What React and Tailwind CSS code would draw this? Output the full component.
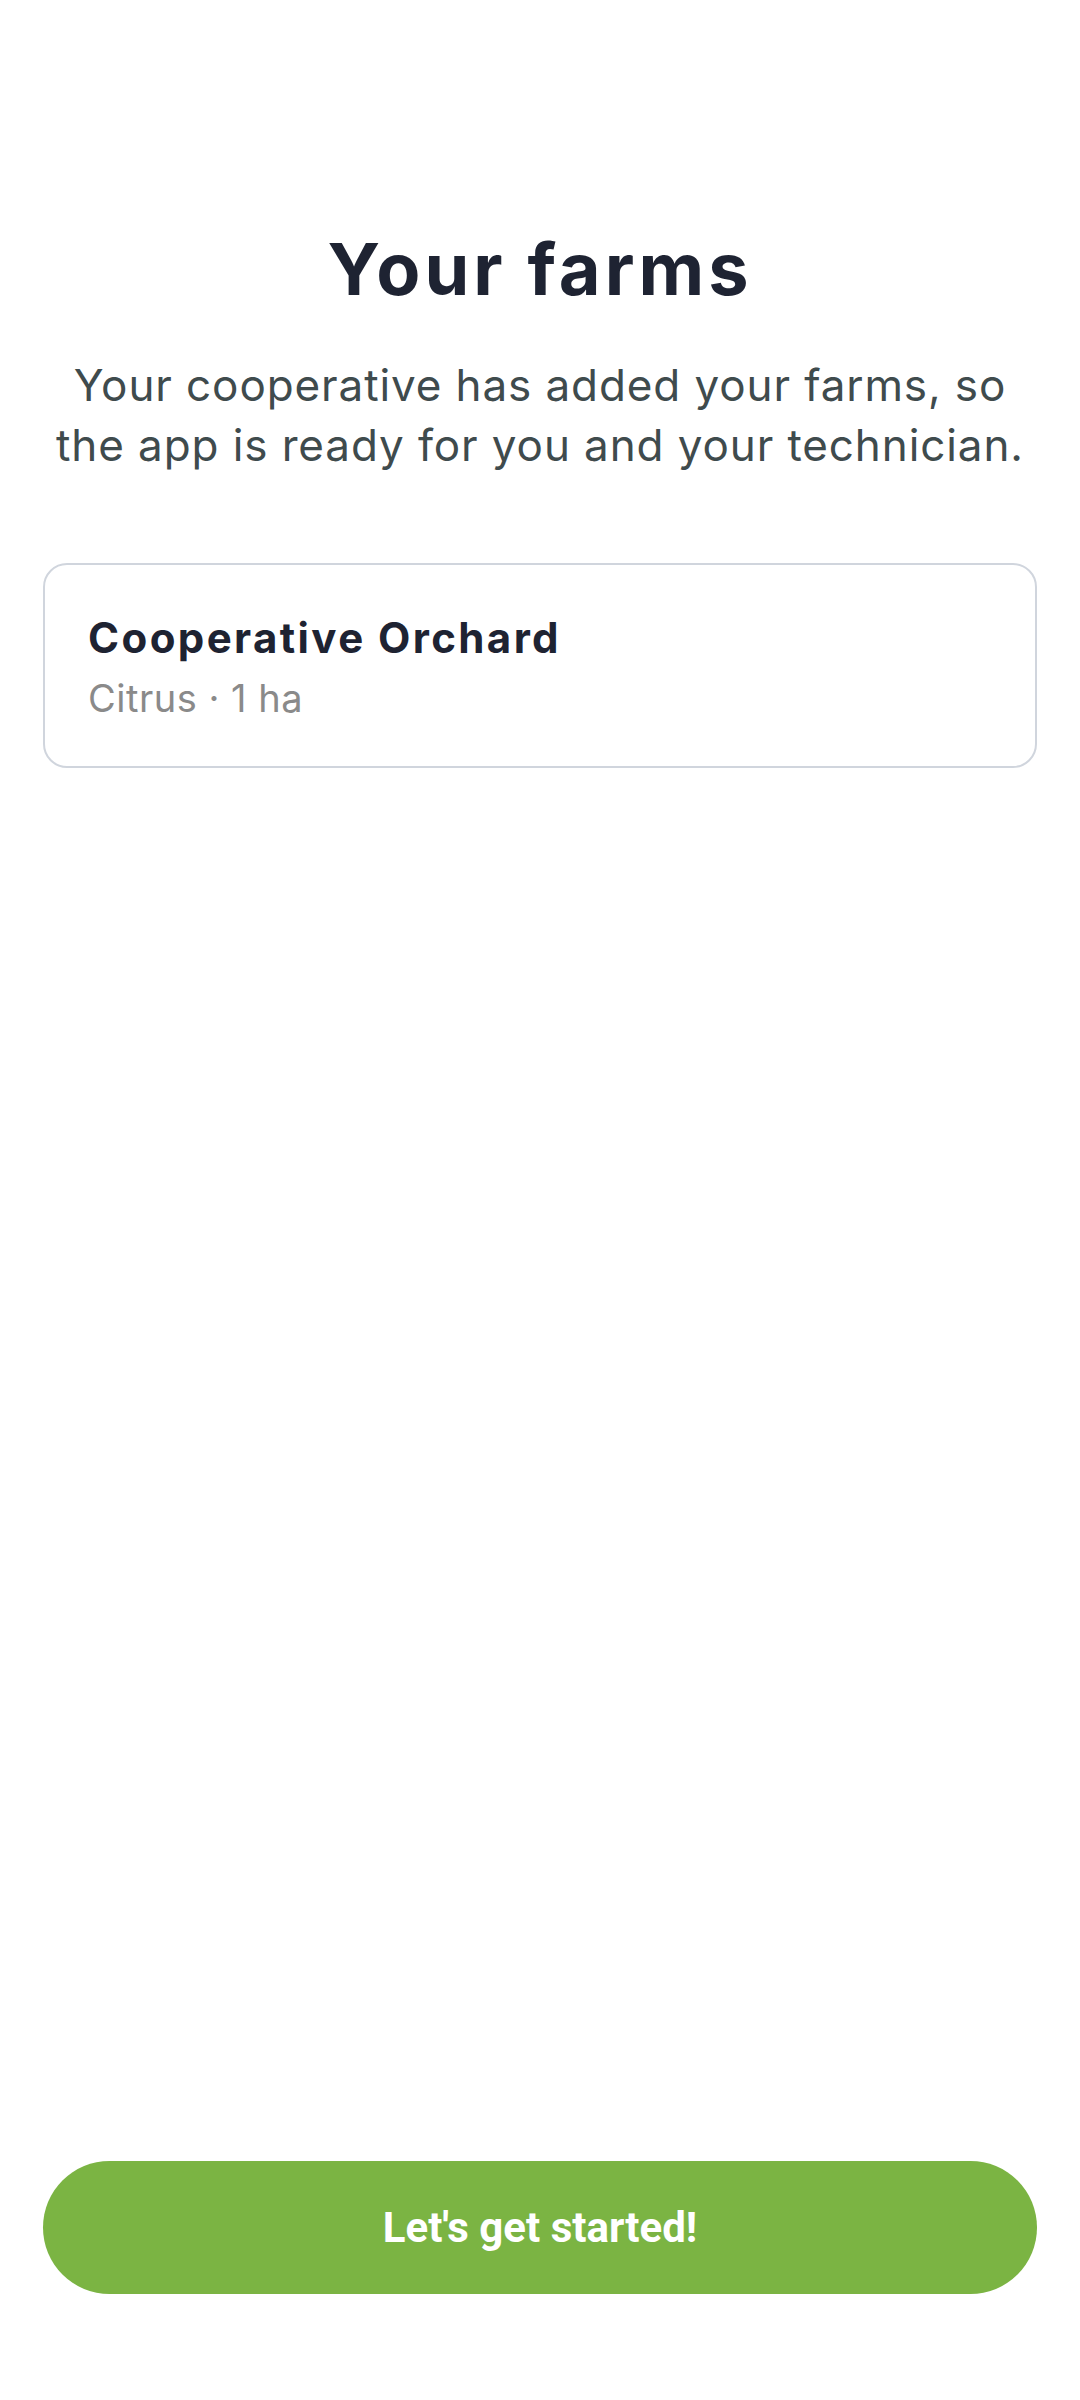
const FarmCard = ({ name, crop, area }) => {
  return (
    <div className="rounded-[24px] border-2 border-[#d0d5dd] bg-white px-[43px] pt-[48px] pb-[46px]">
      <p className="text-[42px] leading-[50px] font-bold tracking-[2.4px] text-[#1e2332]">{name}</p>
      <p className="mt-[13px] text-[38px] leading-[44px] tracking-[0.5px] text-[#8a8a8a]">
        {crop} · {area}
      </p>
    </div>
  );
};

export default function App() {
  return (
    <div
      className="flex min-h-[2400px] flex-col bg-white px-[43px]"
      style={{ fontFamily: "Inter, 'Noto Sans', sans-serif" }}
    >
      <h1 className="mt-[225px] text-center text-[72px] leading-[88px] font-bold tracking-[4px] text-[#1e2332]">
        Your farms
      </h1>
      <p className="mt-[42px] text-center text-[44px] leading-[60px] tracking-[0.9px] text-[#3f4b4d]">
        Your cooperative has added your farms, so
        <br />
        the app is ready for you and your technician.
      </p>
      <div className="mt-[88px]">
        <FarmCard name="Cooperative Orchard" crop="Citrus" area="1 ha" />
      </div>
      <div className="mt-auto pb-[106px]">
        <button
          type="button"
          className="flex h-[133px] w-full items-center justify-center rounded-full bg-[#7bb443] text-[42px] font-bold text-white"
          style={{ fontFamily: "Roboto, sans-serif" }}
        >
          Let's get started!
        </button>
      </div>
    </div>
  );
}
